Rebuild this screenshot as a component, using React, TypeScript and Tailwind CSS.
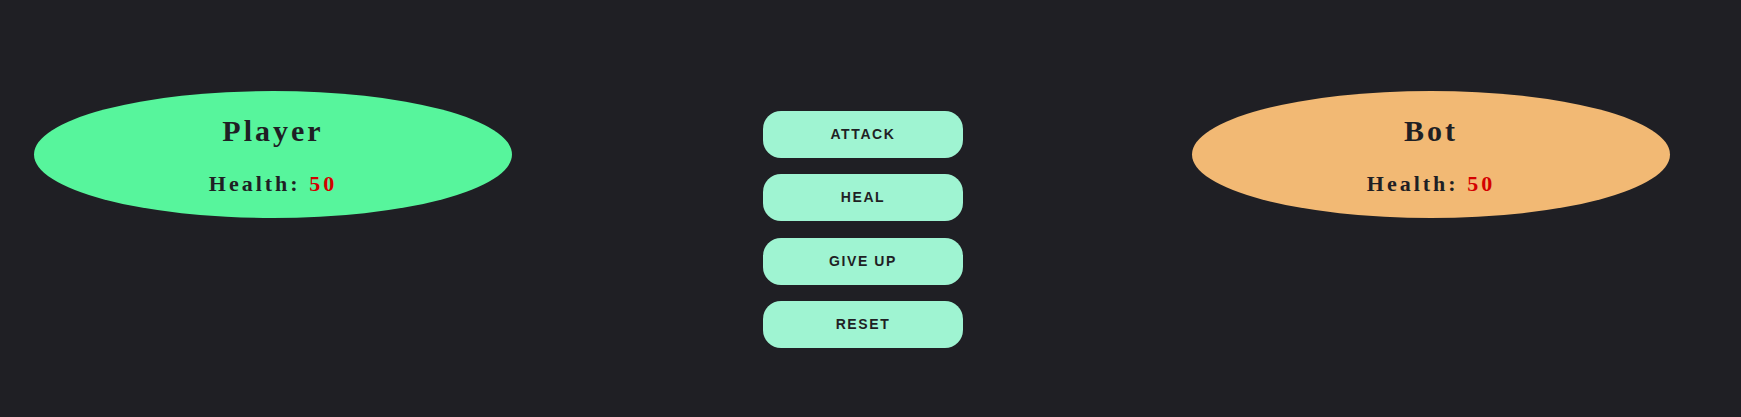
import React, { useState } from "react";

const Fighter = ({ name, health, color }: { name: string; health: number; color: string }) => {
  return (
    <div
      className={`flex h-[127px] w-[478px] shrink-0 flex-col items-center justify-center rounded-[50%] ${color}`}
      style={{ fontFamily: '"Liberation Serif", "Times New Roman", serif' }}
    >
      <h2 className="text-[30px] font-bold leading-[36px] tracking-[3px] text-[#1f1f24]">{name}</h2>
      <p className="mt-[22px] text-[22px] font-bold leading-[26px] tracking-[3px] text-[#1f1f24]">
        Health: <span className="text-[#d40000]">{health}</span>
      </p>
    </div>
  );
};

const ActionButton = ({ label, onClick }: { label: string; onClick: () => void }) => (
  <button
    type="button"
    onClick={onClick}
    className="h-[47px] w-[200px] rounded-[18px] bg-[#9ff4d2] text-[14px] font-bold tracking-[1.6px] text-[#1f1f24]"
    style={{ fontFamily: '"Liberation Sans", Arial, sans-serif' }}
  >
    {label}
  </button>
);

export default function App() {
  const [player, setPlayer] = useState(50);
  const [bot, setBot] = useState(50);

  const reset = () => {
    setPlayer(50);
    setBot(50);
  };

  return (
    <div className="flex h-[417px] w-full items-start bg-[#1f1f24] pl-[34px] pt-[91px]">
      <Fighter name="Player" health={player} color="bg-[#57f59c]" />

      <div className="ml-[251px] mt-[20px] flex flex-col gap-[16.4px]">
        <ActionButton label="ATTACK" onClick={() => setBot((h) => Math.max(0, h - 10))} />
        <ActionButton label="HEAL" onClick={() => setPlayer((h) => Math.min(100, h + 10))} />
        <ActionButton label="GIVE UP" onClick={() => setPlayer(0)} />
        <ActionButton label="RESET" onClick={reset} />
      </div>

      <div className="ml-[229px]">
        <Fighter name="Bot" health={bot} color="bg-[#f2b974]" />
      </div>
    </div>
  );
}
